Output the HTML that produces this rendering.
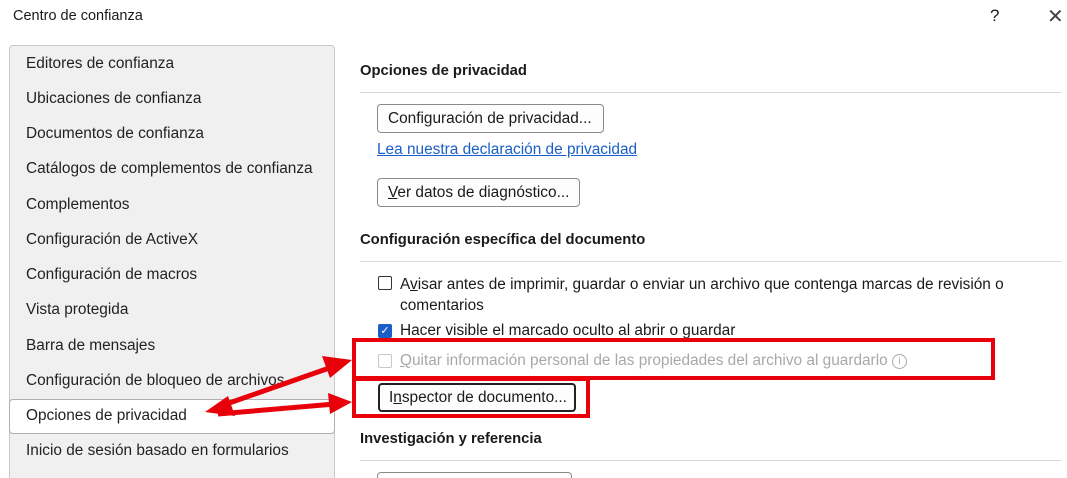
<!DOCTYPE html>
<html><head><meta charset="utf-8"><style>
html,body{margin:0;width:1067px;height:478px;overflow:hidden}
body{background:#fff;font-family:"Liberation Sans",sans-serif;position:relative;color:#1a1a1a}
.a{position:absolute;white-space:nowrap}
.t{font-size:14.5px}
.left{position:absolute;left:9px;top:45px;width:324px;height:450px;background:#f0f0f0;border:1px solid #c8c8c8;border-radius:4px}
.li{position:absolute;left:26px;font-size:15.4px;color:#222}
.sel{position:absolute;left:9px;top:399px;width:324px;height:33px;background:#fff;border:1px solid #b0b0b0;border-radius:4px}
.h{font-weight:bold;font-size:14.8px}
.hr{position:absolute;left:360px;width:701px;height:1px;background:#d8d8d8}
.btn{position:absolute;border:1px solid #8a8a8a;border-radius:4px;background:#fdfdfd;font-size:15.4px;padding:0 0 0 10px;line-height:28px;height:29px;box-sizing:border-box;white-space:nowrap;overflow:hidden}
.cb{position:absolute;width:14px;height:14px;border:1px solid #333;border-radius:2px;box-sizing:border-box;background:#fff}
.red{position:absolute;border:4px solid #e8000a;box-sizing:border-box}
.p{font-size:15.4px}
</style></head><body>
<div class="a t" style="left:13px;top:8px">Centro de confianza</div>
<div class="a" style="left:990px;top:6px;font-size:17px">?</div>
<div class="a" style="left:1047px;top:4px;font-size:20px;color:#444">✕</div>
<div class="left"></div>
<div class="sel"></div>
<div class="li" style="top:55px">Editores de confianza</div>
<div class="li" style="top:90px">Ubicaciones de confianza</div>
<div class="li" style="top:125px">Documentos de confianza</div>
<div class="li" style="top:160px">Catálogos de complementos de confianza</div>
<div class="li" style="top:196px">Complementos</div>
<div class="li" style="top:231px">Configuración de ActiveX</div>
<div class="li" style="top:266px">Configuración de macros</div>
<div class="li" style="top:301px">Vista protegida</div>
<div class="li" style="top:337px">Barra de mensajes</div>
<div class="li" style="top:372px">Configuración de bloqueo de archivos</div>
<div class="li" style="top:407px">Opciones de privacidad</div>
<div class="li" style="top:442px">Inicio de sesión basado en formularios</div>

<div class="a h" style="left:360px;top:63px">Opciones de privacidad</div>
<div class="hr" style="top:92px"></div>
<div class="btn" style="left:377px;top:104px;width:227px">Configuración de privacidad...</div>
<div class="a p" style="left:377px;top:141px;color:#1a5fc8;text-decoration:underline">Lea nuestra declaración de privacidad</div>
<div class="btn" style="left:377px;top:178px;width:203px"><u>V</u>er datos de diagnóstico...</div>
<div class="a h" style="left:360px;top:232px">Configuración específica del documento</div>
<div class="hr" style="top:261px"></div>
<div class="cb" style="left:378px;top:276px"></div>
<div class="a p" style="left:400px;top:274px;line-height:21px">A<u>v</u>isar antes de imprimir, guardar o enviar un archivo que contenga marcas de revisión o<br>comentarios</div>
<div class="cb" style="left:378px;top:324px;background:#1a5fc8;border-color:#1a5fc8;color:#fff;font-size:11px;line-height:12px;text-align:center">✓</div>
<div class="a p" style="left:400px;top:322px">Hacer visible el marcado oculto al abrir o guardar</div>
<div class="cb" style="left:378px;top:354px;border-color:#c8c8c8"></div>
<div class="a p" style="left:400px;top:352px;color:#a8a8a8"><u>Q</u>uitar información personal de las propiedades del archivo al guardarlo <span style="display:inline-block;width:13px;height:13px;border:1px solid #a8a8a8;border-radius:50%;font-size:10px;line-height:13px;text-align:center;vertical-align:1px">i</span></div>
<div class="btn" style="left:378px;top:383px;width:198px;border:2px solid #222;padding-left:9px;line-height:26px">I<u>n</u>spector de documento...</div>
<div class="a h" style="left:360px;top:431px">Investigación y referencia</div>
<div class="hr" style="top:460px"></div>
<div class="btn" style="left:377px;top:472px;width:195px"></div>
<div class="red" style="left:352px;top:338px;width:643px;height:42px"></div>
<div class="red" style="left:352px;top:377px;width:238px;height:41px"></div>
<svg style="position:absolute;left:0;top:0" width="1067" height="478">
<g stroke="#e8000a" stroke-width="5" fill="#e8000a">
<line x1="215" y1="408" x2="335" y2="366"/>
<line x1="218" y1="414" x2="335" y2="404"/>
</g>
<g fill="#e8000a">
<polygon points="352,360 322,356 330,378"/>
<polygon points="205,412 228,396 235,416"/>
<polygon points="352,402 328,393 330,414"/>
</g>
</svg>
</body></html>
